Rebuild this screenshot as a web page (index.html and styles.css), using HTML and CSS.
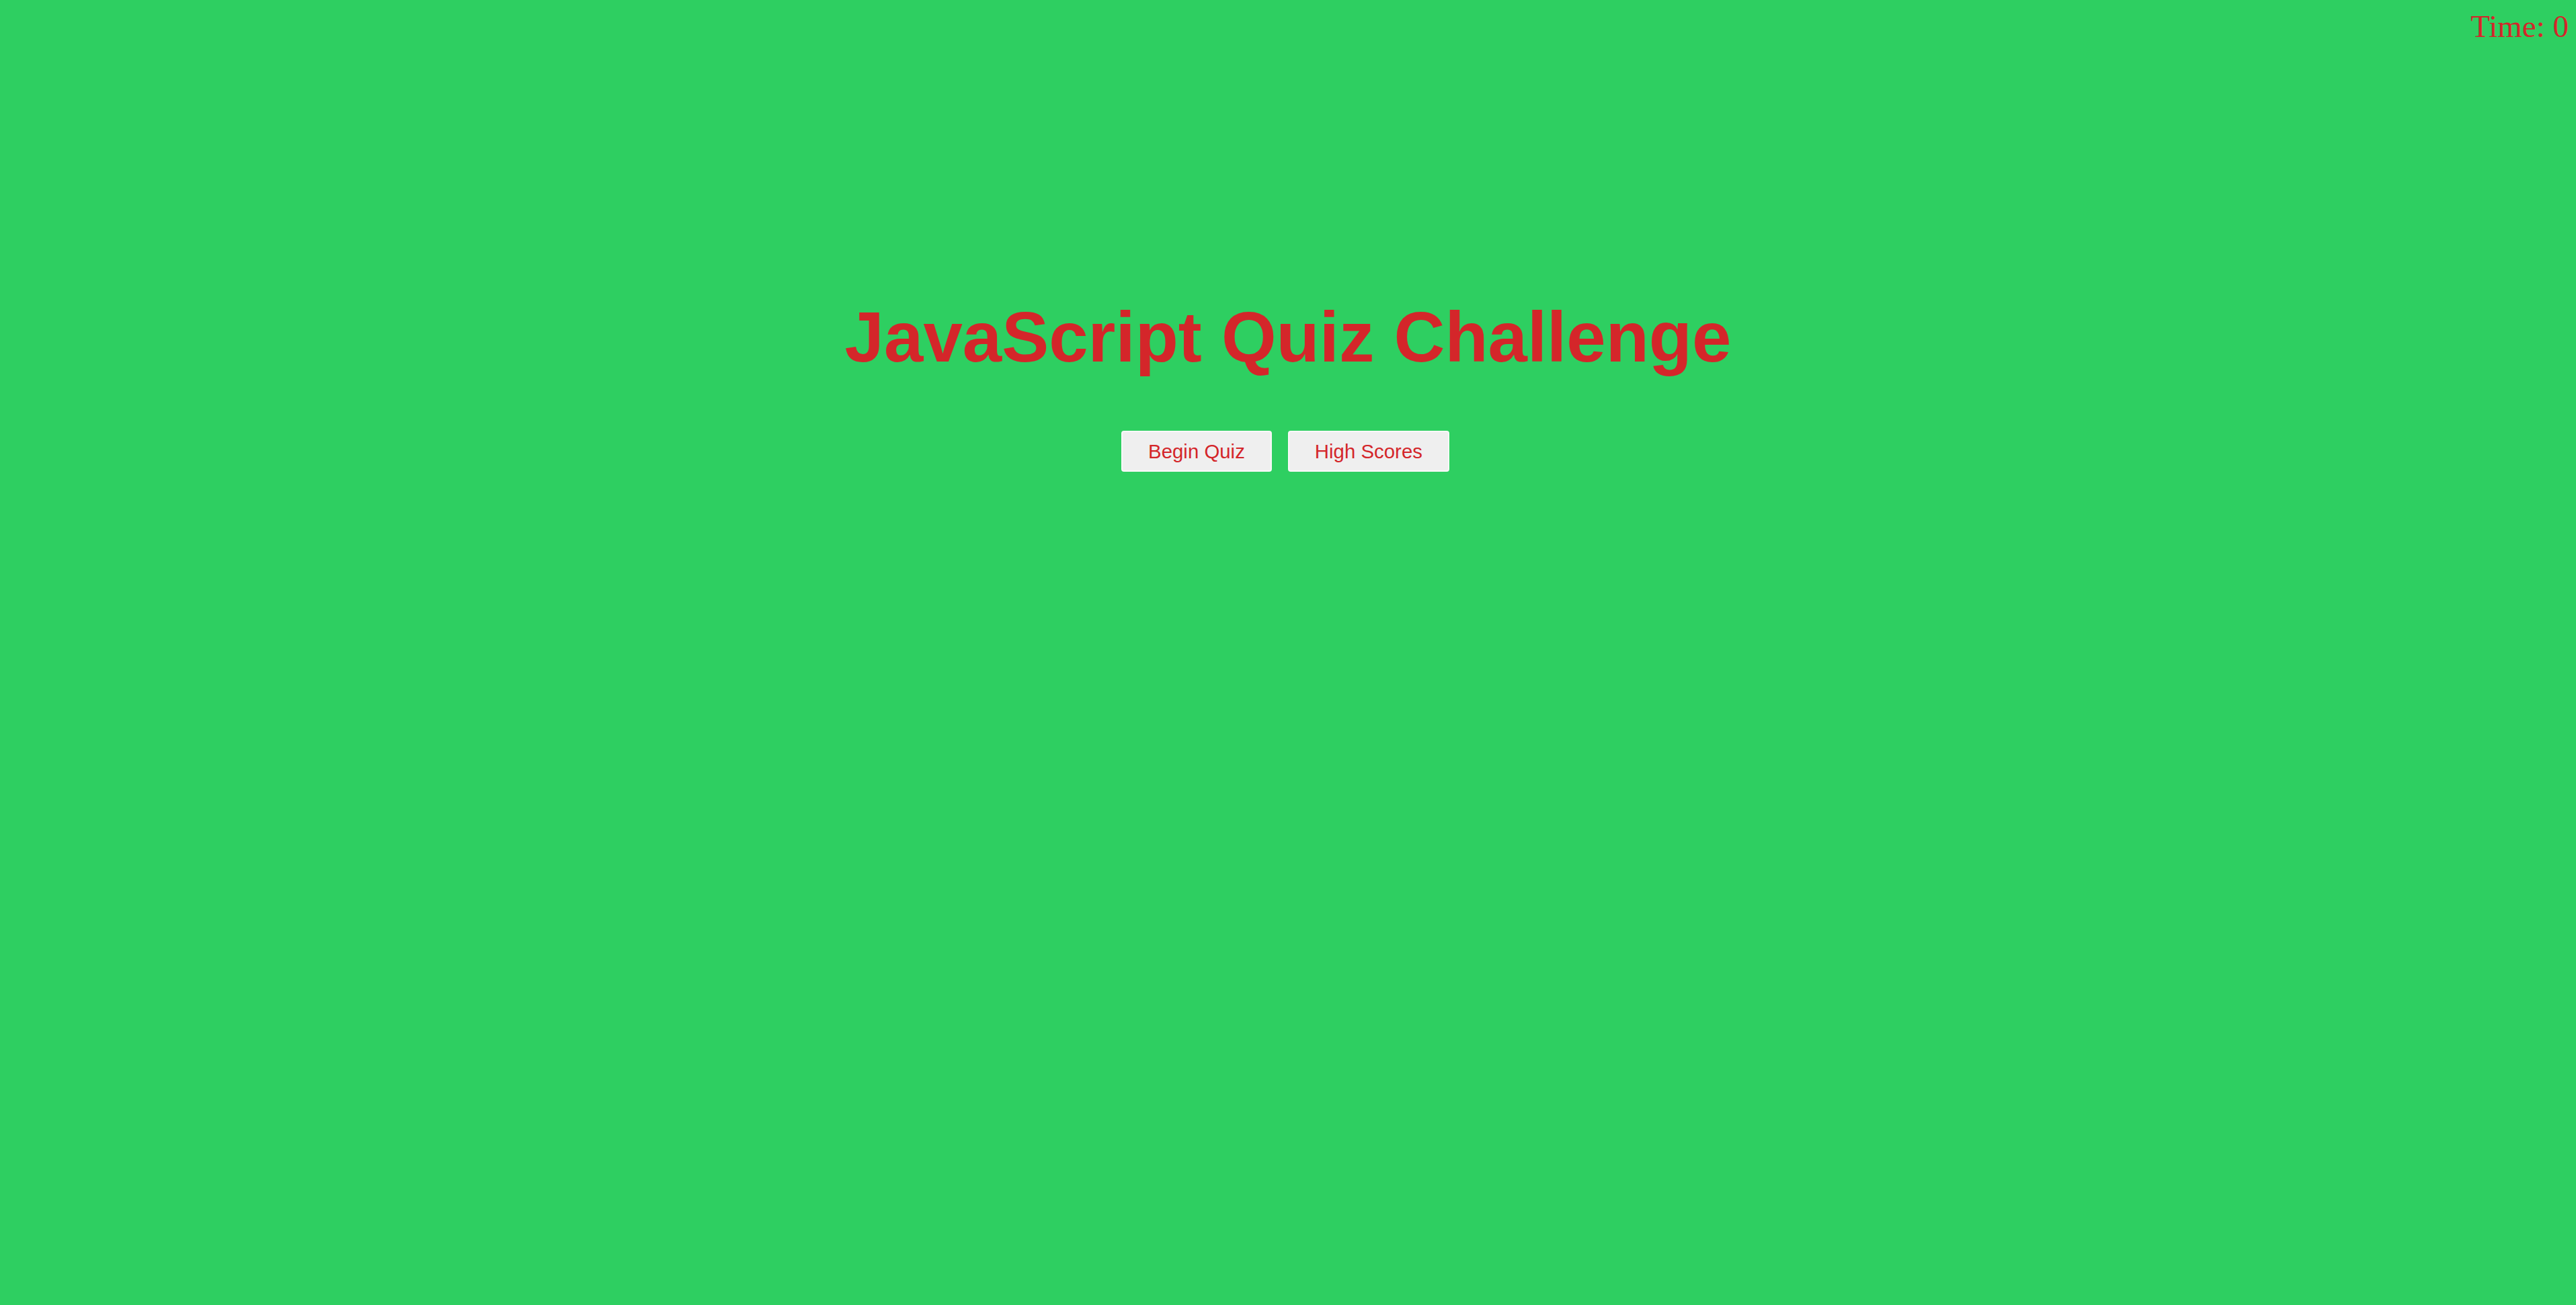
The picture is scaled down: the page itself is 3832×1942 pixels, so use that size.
FILE: index.html
```html
<!DOCTYPE html>
<html lang="en">
<head>
<meta charset="utf-8">
<title>JavaScript Quiz Challenge</title>
<link rel="stylesheet" href="styles.css">
</head>
<body>
<header class="topbar">
  <div class="timer">Time: <span class="timer-value">0</span></div>
</header>
<main class="intro">
  <h1 class="title">JavaScript Quiz Challenge</h1>
  <div class="actions">
    <button class="btn" type="button">Begin Quiz</button>
    <button class="btn" type="button">High Scores</button>
  </div>
</main>
</body>
</html>
```

FILE: styles.css
```css
html, body {
  margin: 0;
  padding: 0;
}

body {
  background: #2ecf61;
  color: #d4262a;
  min-height: 100vh;
}

.topbar {
  display: flex;
  justify-content: flex-end;
  padding: 12px 11px 0 0;
}

.timer {
  font-family: "Liberation Serif", "Times New Roman", serif;
  font-size: 47px;
  line-height: 54px;
  color: #d4262a;
}

.intro {
  display: flex;
  flex-direction: column;
  align-items: center;
  padding-top: 375px;
}

.title {
  margin: 0;
  font-family: "Liberation Sans", Arial, sans-serif;
  font-weight: bold;
  font-size: 105px;
  line-height: 121px;
  color: #d4262a;
}

.actions {
  display: flex;
  gap: 24px;
  margin-top: 79px;
  margin-right: 8px;
}

.btn {
  font-family: "Liberation Sans", Arial, sans-serif;
  font-size: 29.4px;
  line-height: 34px;
  color: #d4262a;
  background: #efefef;
  border: 2px solid #f8f8f8;
  border-radius: 4px;
  padding: 11.5px 38px;
  margin: 0;
  cursor: pointer;
}
```
